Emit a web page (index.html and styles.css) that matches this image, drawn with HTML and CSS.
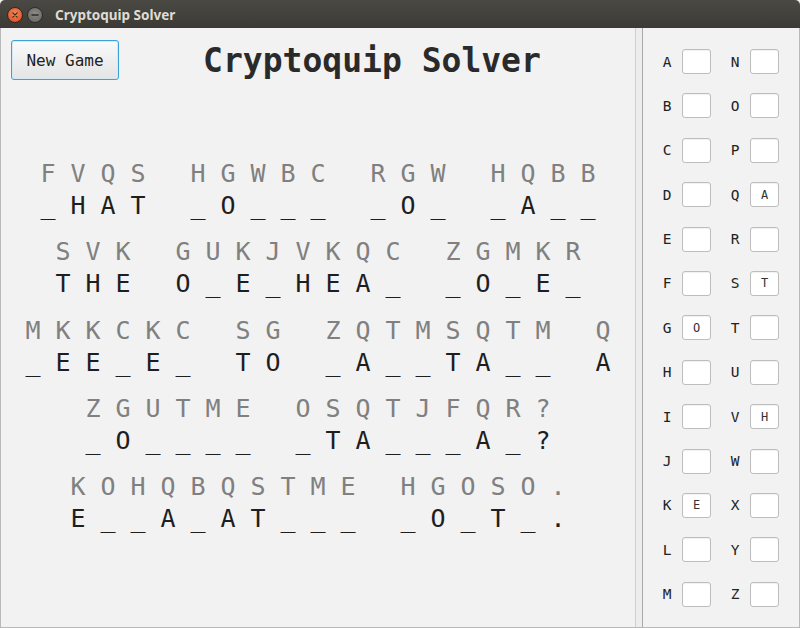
FILE: index.html
```html
<!DOCTYPE html>
<html>
<head>
<meta charset="utf-8">
<title>Cryptoquip Solver</title>
<link rel="stylesheet" href="styles.css">
</head>
<body>
<div class="window">
  <div class="titlebar">
    <span class="wbtn close"><svg width="16" height="16" viewBox="0 0 16 16"><path d="M5.5 5.5 L10.5 10.5 M10.5 5.5 L5.5 10.5" stroke="#3b2a22" stroke-width="1.4" stroke-linecap="round"/></svg></span>
    <span class="wbtn minimize"><svg width="16" height="16" viewBox="0 0 16 16"><path d="M4.5 8 L11.5 8" stroke="#2e2d2a" stroke-width="1.5" stroke-linecap="round"/></svg></span>
    <span class="wtitle">Cryptoquip Solver</span>
  </div>
  <div class="content">
    <div class="left">
      <div class="header">
        <button class="newgame">New Game</button>
        <h1 class="title">Cryptoquip Solver</h1>
      </div>
      <div class="puzzle">
        <div class="prow">
          <div class="word"><div class="cell"><span class="c">F</span><span class="p">_</span></div><div class="cell"><span class="c">V</span><span class="p">H</span></div><div class="cell"><span class="c">Q</span><span class="p">A</span></div><div class="cell"><span class="c">S</span><span class="p">T</span></div></div>
          <div class="word"><div class="cell"><span class="c">H</span><span class="p">_</span></div><div class="cell"><span class="c">G</span><span class="p">O</span></div><div class="cell"><span class="c">W</span><span class="p">_</span></div><div class="cell"><span class="c">B</span><span class="p">_</span></div><div class="cell"><span class="c">C</span><span class="p">_</span></div></div>
          <div class="word"><div class="cell"><span class="c">R</span><span class="p">_</span></div><div class="cell"><span class="c">G</span><span class="p">O</span></div><div class="cell"><span class="c">W</span><span class="p">_</span></div></div>
          <div class="word"><div class="cell"><span class="c">H</span><span class="p">_</span></div><div class="cell"><span class="c">Q</span><span class="p">A</span></div><div class="cell"><span class="c">B</span><span class="p">_</span></div><div class="cell"><span class="c">B</span><span class="p">_</span></div></div>
        </div>
        <div class="prow">
          <div class="word"><div class="cell"><span class="c">S</span><span class="p">T</span></div><div class="cell"><span class="c">V</span><span class="p">H</span></div><div class="cell"><span class="c">K</span><span class="p">E</span></div></div>
          <div class="word"><div class="cell"><span class="c">G</span><span class="p">O</span></div><div class="cell"><span class="c">U</span><span class="p">_</span></div><div class="cell"><span class="c">K</span><span class="p">E</span></div><div class="cell"><span class="c">J</span><span class="p">_</span></div><div class="cell"><span class="c">V</span><span class="p">H</span></div><div class="cell"><span class="c">K</span><span class="p">E</span></div><div class="cell"><span class="c">Q</span><span class="p">A</span></div><div class="cell"><span class="c">C</span><span class="p">_</span></div></div>
          <div class="word"><div class="cell"><span class="c">Z</span><span class="p">_</span></div><div class="cell"><span class="c">G</span><span class="p">O</span></div><div class="cell"><span class="c">M</span><span class="p">_</span></div><div class="cell"><span class="c">K</span><span class="p">E</span></div><div class="cell"><span class="c">R</span><span class="p">_</span></div></div>
        </div>
        <div class="prow">
          <div class="word"><div class="cell"><span class="c">M</span><span class="p">_</span></div><div class="cell"><span class="c">K</span><span class="p">E</span></div><div class="cell"><span class="c">K</span><span class="p">E</span></div><div class="cell"><span class="c">C</span><span class="p">_</span></div><div class="cell"><span class="c">K</span><span class="p">E</span></div><div class="cell"><span class="c">C</span><span class="p">_</span></div></div>
          <div class="word"><div class="cell"><span class="c">S</span><span class="p">T</span></div><div class="cell"><span class="c">G</span><span class="p">O</span></div></div>
          <div class="word"><div class="cell"><span class="c">Z</span><span class="p">_</span></div><div class="cell"><span class="c">Q</span><span class="p">A</span></div><div class="cell"><span class="c">T</span><span class="p">_</span></div><div class="cell"><span class="c">M</span><span class="p">_</span></div><div class="cell"><span class="c">S</span><span class="p">T</span></div><div class="cell"><span class="c">Q</span><span class="p">A</span></div><div class="cell"><span class="c">T</span><span class="p">_</span></div><div class="cell"><span class="c">M</span><span class="p">_</span></div></div>
          <div class="word"><div class="cell"><span class="c">Q</span><span class="p">A</span></div></div>
        </div>
        <div class="prow">
          <div class="word"><div class="cell"><span class="c">Z</span><span class="p">_</span></div><div class="cell"><span class="c">G</span><span class="p">O</span></div><div class="cell"><span class="c">U</span><span class="p">_</span></div><div class="cell"><span class="c">T</span><span class="p">_</span></div><div class="cell"><span class="c">M</span><span class="p">_</span></div><div class="cell"><span class="c">E</span><span class="p">_</span></div></div>
          <div class="word"><div class="cell"><span class="c">O</span><span class="p">_</span></div><div class="cell"><span class="c">S</span><span class="p">T</span></div><div class="cell"><span class="c">Q</span><span class="p">A</span></div><div class="cell"><span class="c">T</span><span class="p">_</span></div><div class="cell"><span class="c">J</span><span class="p">_</span></div><div class="cell"><span class="c">F</span><span class="p">_</span></div><div class="cell"><span class="c">Q</span><span class="p">A</span></div><div class="cell"><span class="c">R</span><span class="p">_</span></div><div class="cell"><span class="c">?</span><span class="p">?</span></div></div>
        </div>
        <div class="prow">
          <div class="word"><div class="cell"><span class="c">K</span><span class="p">E</span></div><div class="cell"><span class="c">O</span><span class="p">_</span></div><div class="cell"><span class="c">H</span><span class="p">_</span></div><div class="cell"><span class="c">Q</span><span class="p">A</span></div><div class="cell"><span class="c">B</span><span class="p">_</span></div><div class="cell"><span class="c">Q</span><span class="p">A</span></div><div class="cell"><span class="c">S</span><span class="p">T</span></div><div class="cell"><span class="c">T</span><span class="p">_</span></div><div class="cell"><span class="c">M</span><span class="p">_</span></div><div class="cell"><span class="c">E</span><span class="p">_</span></div></div>
          <div class="word"><div class="cell"><span class="c">H</span><span class="p">_</span></div><div class="cell"><span class="c">G</span><span class="p">O</span></div><div class="cell"><span class="c">O</span><span class="p">_</span></div><div class="cell"><span class="c">S</span><span class="p">T</span></div><div class="cell"><span class="c">O</span><span class="p">_</span></div><div class="cell"><span class="c">.</span><span class="p">.</span></div></div>
        </div>
      </div>
    </div>
    <div class="divider"></div>
    <div class="right">
      <div class="keycol">
        <span class="klabel">A</span><span class="kbox"></span>
        <span class="klabel">B</span><span class="kbox"></span>
        <span class="klabel">C</span><span class="kbox"></span>
        <span class="klabel">D</span><span class="kbox"></span>
        <span class="klabel">E</span><span class="kbox"></span>
        <span class="klabel">F</span><span class="kbox"></span>
        <span class="klabel">G</span><span class="kbox">O</span>
        <span class="klabel">H</span><span class="kbox"></span>
        <span class="klabel">I</span><span class="kbox"></span>
        <span class="klabel">J</span><span class="kbox"></span>
        <span class="klabel">K</span><span class="kbox">E</span>
        <span class="klabel">L</span><span class="kbox"></span>
        <span class="klabel">M</span><span class="kbox"></span>
      </div>
      <div class="keycol">
        <span class="klabel">N</span><span class="kbox"></span>
        <span class="klabel">O</span><span class="kbox"></span>
        <span class="klabel">P</span><span class="kbox"></span>
        <span class="klabel">Q</span><span class="kbox">A</span>
        <span class="klabel">R</span><span class="kbox"></span>
        <span class="klabel">S</span><span class="kbox">T</span>
        <span class="klabel">T</span><span class="kbox"></span>
        <span class="klabel">U</span><span class="kbox"></span>
        <span class="klabel">V</span><span class="kbox">H</span>
        <span class="klabel">W</span><span class="kbox"></span>
        <span class="klabel">X</span><span class="kbox"></span>
        <span class="klabel">Y</span><span class="kbox"></span>
        <span class="klabel">Z</span><span class="kbox"></span>
      </div>
    </div>
  </div>
</div>
</body>
</html>
```
FILE: styles.css
```css
html, body {
  margin: 0;
  padding: 0;
  background: #f2f2f2;
}
.window {
  width: 800px;
  height: 628px;
  display: flex;
  flex-direction: column;
  overflow: hidden;
}
.titlebar {
  height: 28px;
  flex: none;
  display: flex;
  align-items: center;
  background: linear-gradient(#4a4944, #3b3a36);
  border-radius: 5px 5px 0 0;
  box-sizing: border-box;
  padding-left: 7px;
}
.wbtn {
  width: 16px;
  height: 16px;
  border-radius: 50%;
  display: flex;
  align-items: center;
  justify-content: center;
  margin-top: 2px;
  box-sizing: border-box;
}
.wbtn svg { display: block; }
.close {
  background: radial-gradient(circle at 50% 40%, #f58a5c, #e05a2c 70%, #c8471d);
  border: 1px solid #35281f;
}
.minimize {
  margin-left: 4px;
  background: radial-gradient(circle at 50% 40%, #8c8b86, #6d6c68 75%);
  border: 1px solid #2e2d2a;
}
.wtitle {
  margin-left: 12px;
  margin-top: 1px;
  font-family: "Noto Sans", "DejaVu Sans", sans-serif;
  font-weight: bold;
  font-size: 13.5px;
  color: #dfdbd2;
}
.content {
  flex: 1;
  display: flex;
  border-left: 1px solid #b8b8b8;
  border-right: 1px solid #b8b8b8;
  border-bottom: 1px solid #b8b8b8;
  background: #f2f2f2;
}
.left {
  width: 634px;
  flex: none;
  display: flex;
  flex-direction: column;
}
.header {
  display: flex;
  align-items: center;
  padding: 12px 10px 0 10px;
}
.newgame {
  width: 108px;
  height: 40px;
  margin: 0;
  padding: 0;
  border: 1px solid #39a2d6;
  border-radius: 3px;
  background: linear-gradient(#fafafa, #e4e4e4);
  box-shadow: inset 0 0 0 1px #d6e8f2;
  font-family: "DejaVu Sans Mono", monospace;
  font-size: 16px;
  color: #222;
}
.title {
  flex: 1;
  margin: 0;
  text-align: center;
  font-family: "DejaVu Sans Mono", monospace;
  font-weight: bold;
  font-size: 33px;
  color: #2a2a2a;
}
.puzzle {
  display: flex;
  flex-direction: column;
  gap: 14.3px;
  padding-top: 78px;
}
.prow {
  display: flex;
  justify-content: center;
  gap: 30px;
}
.word {
  display: flex;
}
.cell {
  width: 30px;
  display: flex;
  flex-direction: column;
  align-items: center;
  font-family: "DejaVu Sans Mono", monospace;
  font-size: 25px;
  line-height: 32px;
}
.c { color: #808080; }
.p { color: #1e1e1e; }
.divider {
  width: 8px;
  flex: none;
  box-sizing: border-box;
  border-left: 1px solid #cfcfcf;
  border-right: 1px solid #a9a9a9;
  background: #ededed;
}
.right {
  flex: 1;
  display: flex;
  gap: 17px;
  padding: 21px 0 0 17px;
}
.keycol {
  display: grid;
  grid-template-columns: 14px 29px;
  grid-auto-rows: 25px;
  column-gap: 8px;
  row-gap: 19.4px;
  align-items: center;
  align-content: start;
}
.klabel {
  text-align: center;
  font-family: "DejaVu Sans Mono", monospace;
  font-size: 14.5px;
  color: #222;
}
.kbox {
  height: 25px;
  box-sizing: border-box;
  border: 1px solid #bdbdbd;
  border-radius: 3px;
  background: #fff;
  box-shadow: inset 0 1px 1px rgba(0,0,0,0.06);
  display: flex;
  align-items: center;
  justify-content: center;
  font-family: "DejaVu Sans Mono", monospace;
  font-size: 12px;
  color: #333;
}
```
